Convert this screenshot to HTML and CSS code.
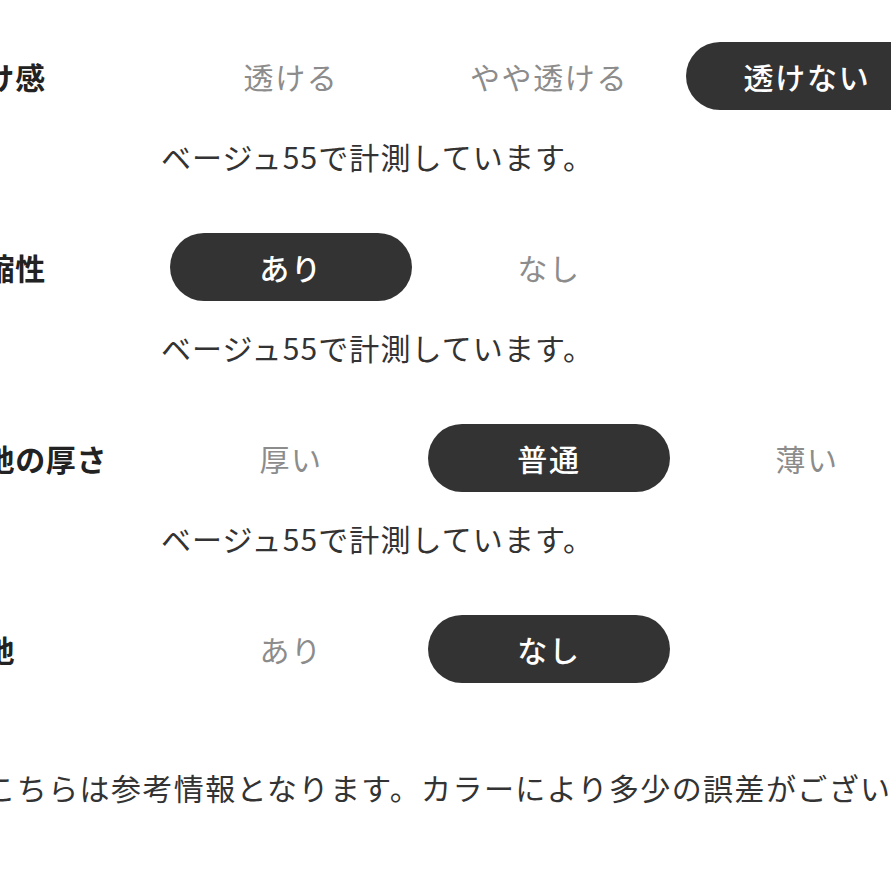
FILE: index.html
```html
<!DOCTYPE html>
<html lang="ja">
<head>
<meta charset="utf-8">
<title>サイズ感</title>
<link rel="stylesheet" href="styles.css">
</head>
<body>
<div class="spec">
  <section class="item">
    <div class="row">
      <div class="label">透け感</div>
      <div class="options">
        <span class="opt">透ける</span>
        <span class="opt">やや透ける</span>
        <span class="opt on">透けない</span>
      </div>
    </div>
    <p class="note">ベージュ55で計測しています。</p>
  </section>
  <section class="item">
    <div class="row">
      <div class="label">伸縮性</div>
      <div class="options">
        <span class="opt on">あり</span>
        <span class="opt">なし</span>
      </div>
    </div>
    <p class="note">ベージュ55で計測しています。</p>
  </section>
  <section class="item">
    <div class="row">
      <div class="label">生地の厚さ</div>
      <div class="options">
        <span class="opt">厚い</span>
        <span class="opt on">普通</span>
        <span class="opt">薄い</span>
      </div>
    </div>
    <p class="note">ベージュ55で計測しています。</p>
  </section>
  <section class="item last">
    <div class="row">
      <div class="label">裏地</div>
      <div class="options">
        <span class="opt">あり</span>
        <span class="opt on">なし</span>
      </div>
    </div>
  </section>
  <p class="foot">※こちらは参考情報となります。カラーにより多少の誤差がございます。</p>
</div>
</body>
</html>
```

FILE: styles.css
```css
html, body {
  margin: 0;
  padding: 0;
  background: #fff;
  overflow: hidden;
}
body {
  font-family: "Noto Sans CJK JP", "Noto Sans", sans-serif;
  color: #333;
}
.spec {
  margin-left: -46px;
  padding-top: 42px;
  width: 1100px;
}
.item {
  margin-bottom: 57px;
}
.item.last {
  margin-bottom: 84px;
}
.row {
  display: flex;
  align-items: center;
  height: 68px;
}
.label {
  width: 216px;
  flex: none;
  font-size: 30px;
  font-weight: 700;
  color: #222;
  line-height: 40px;
  letter-spacing: 0.6px;
}
.options {
  display: flex;
  gap: 16px;
}
.opt {
  width: 242px;
  height: 68px;
  border-radius: 34px;
  display: flex;
  align-items: center;
  justify-content: center;
  font-size: 30px;
  letter-spacing: 1.6px;
  color: #8c8c8c;
}
.opt.on {
  background: #333;
  color: #fff;
  font-weight: 500;
  letter-spacing: 1.8px;
}
.note {
  margin: 26px 0 0 207px;
  font-size: 30px;
  line-height: 40px;
  letter-spacing: 1.1px;
  color: #333;
}
.foot {
  margin: 0;
  font-size: 30px;
  line-height: 40px;
  letter-spacing: 1.4px;
  color: #333;
  white-space: nowrap;
}
```
